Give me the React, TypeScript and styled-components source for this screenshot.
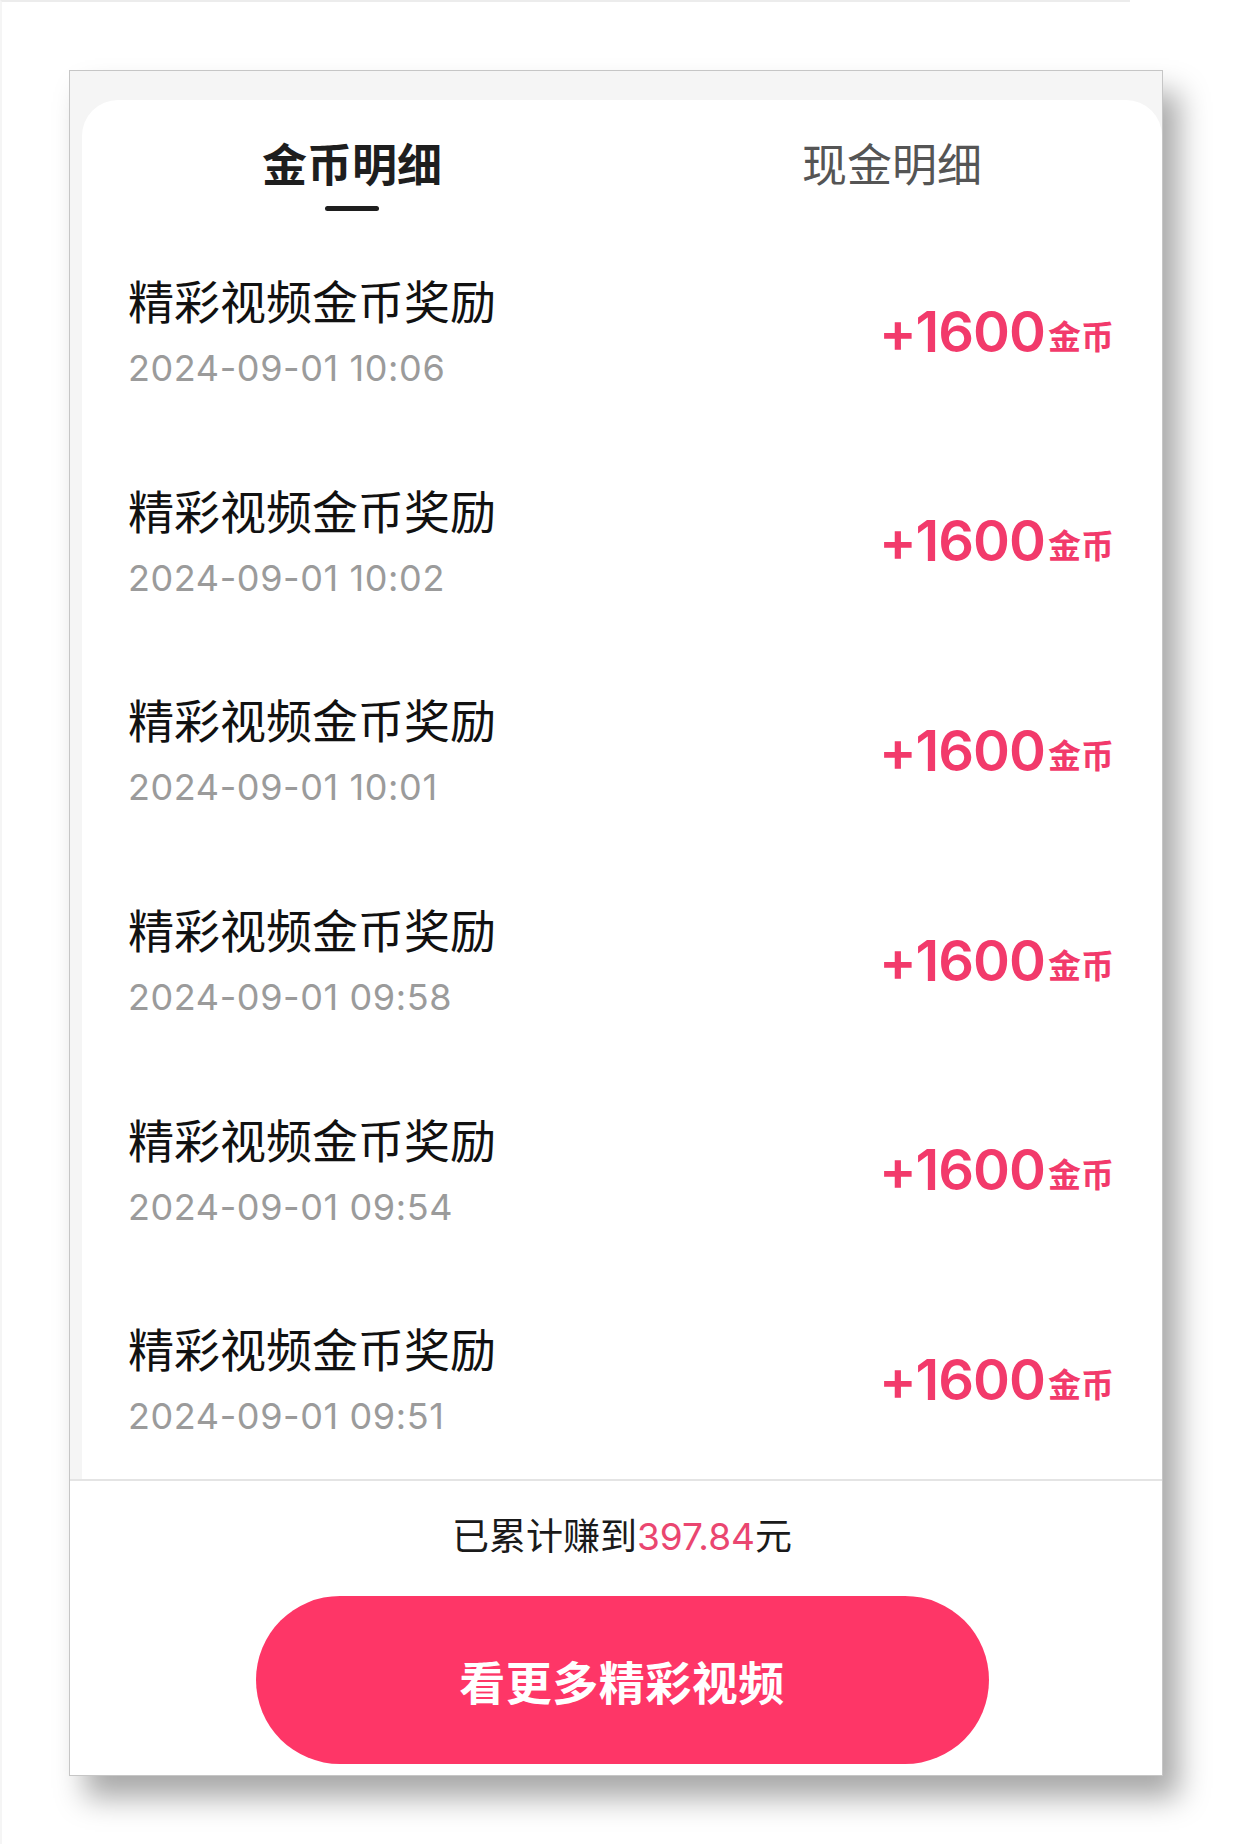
import styled, { createGlobalStyle } from "styled-components"

const GlobalStyle = createGlobalStyle`
  html, body {
    margin: 0;
    padding: 0;
    background: #ffffff;
  }
  body {
    font-family: Inter, "Noto Sans CJK SC", sans-serif;
    -webkit-font-smoothing: antialiased;
  }
`

const Page = styled.div`
  box-sizing: border-box;
  width: 1130px;
  padding: 68px 0 68px 67px;
  border-top: 2px solid #ececec;
  border-left: 2px solid #f5f5f5;
`

const Frame = styled.div`
  display: flex;
  flex-direction: column;
  width: 1094px;
  box-sizing: border-box;
  background: #ffffff;
  border: 1px solid #c6c6c6;
  box-shadow: 16px 22px 28px rgba(0, 0, 0, 0.34);
`

const TopArea = styled.div`
  background: #f5f5f5;
  padding: 29px 0 0 12px;
`

const Card = styled.div`
  height: 1379px;
  overflow: hidden;
  background: #ffffff;
  border-radius: 36px 36px 0 0;
  display: flex;
  flex-direction: column;
`

const Tabs = styled.div`
  display: grid;
  grid-template-columns: 1fr 1fr;
  padding-top: 37px;
`

const Tab = styled.div<{ $active?: boolean }>`
  display: flex;
  flex-direction: column;
  align-items: center;
  font-family: "Noto Sans CJK SC", sans-serif;
  font-size: 45px;
  line-height: 52px;
  font-weight: ${({ $active }) => ($active ? 700 : 400)};
  color: ${({ $active }) => ($active ? "#1e1e1e" : "#555555")};
`

const Indicator = styled.div<{ $visible?: boolean }>`
  width: 54px;
  height: 5px;
  margin-top: 17px;
  border-radius: 3px;
  background: ${({ $visible }) => ($visible ? "#1e1e1e" : "transparent")};
`

const List = styled.div`
  padding-top: 16px;
`

const Row = styled.div`
  height: 209.6px;
  display: flex;
  align-items: center;
  justify-content: space-between;
  padding: 0 48px 0 46px;
`

const Info = styled.div`
  display: flex;
  flex-direction: column;
  gap: 21px;
`

const Title = styled.div`
  font-family: "Noto Sans CJK SC", sans-serif;
  font-size: 46px;
  line-height: 52px;
  color: #111111;
`

const Time = styled.div`
  font-family: Inter, sans-serif;
  font-size: 36px;
  line-height: 44px;
  color: #9b9b9b;
  letter-spacing: 0.6px;
`

const Amount = styled.div`
  display: flex;
  align-items: baseline;
  color: #f23a6b;
`

const AmountValue = styled.span`
  font-family: Inter, sans-serif;
  font-size: 56px;
  font-weight: 600;
  letter-spacing: -1px;
`

const AmountUnit = styled.span`
  font-family: "Noto Sans CJK SC", sans-serif;
  font-size: 33px;
  font-weight: 700;
  margin-left: 3px;
  transform: translateY(-3px);
`

const Footer = styled.div`
  display: flex;
  flex-direction: column;
  align-items: center;
  border-top: 2px solid #e4e4e4;
  padding: 34px 0 11px 12px;
`

const Summary = styled.div`
  font-family: Inter, "Noto Sans CJK SC", sans-serif;
  font-size: 37px;
  line-height: 44px;
  color: #1a1a1a;
`

const Highlight = styled.span`
  color: #ea4670;
`

const ActionButton = styled.button`
  margin-top: 37px;
  width: 733px;
  height: 168px;
  border: none;
  border-radius: 84px;
  background: #fe3667;
  color: #ffffff;
  font-family: "Noto Sans CJK SC", sans-serif;
  font-size: 46px;
  font-weight: 700;
  letter-spacing: 0.5px;
  cursor: pointer;
`

const records = [
  "2024-09-01 10:06",
  "2024-09-01 10:02",
  "2024-09-01 10:01",
  "2024-09-01 09:58",
  "2024-09-01 09:54",
  "2024-09-01 09:51",
]

export default function App() {
  return (
    <>
      <GlobalStyle />
      <Page>
        <Frame>
          <TopArea>
            <Card>
              <Tabs>
                <Tab $active>
                  金币明细
                  <Indicator $visible />
                </Tab>
                <Tab>
                  现金明细
                  <Indicator />
                </Tab>
              </Tabs>
              <List>
                {records.map((time) => (
                  <Row key={time}>
                    <Info>
                      <Title>精彩视频金币奖励</Title>
                      <Time>{time}</Time>
                    </Info>
                    <Amount>
                      <AmountValue>+1600</AmountValue>
                      <AmountUnit>金币</AmountUnit>
                    </Amount>
                  </Row>
                ))}
              </List>
            </Card>
          </TopArea>
          <Footer>
            <Summary>
              已累计赚到<Highlight>397.84</Highlight>元
            </Summary>
            <ActionButton>看更多精彩视频</ActionButton>
          </Footer>
        </Frame>
      </Page>
    </>
  )
}
